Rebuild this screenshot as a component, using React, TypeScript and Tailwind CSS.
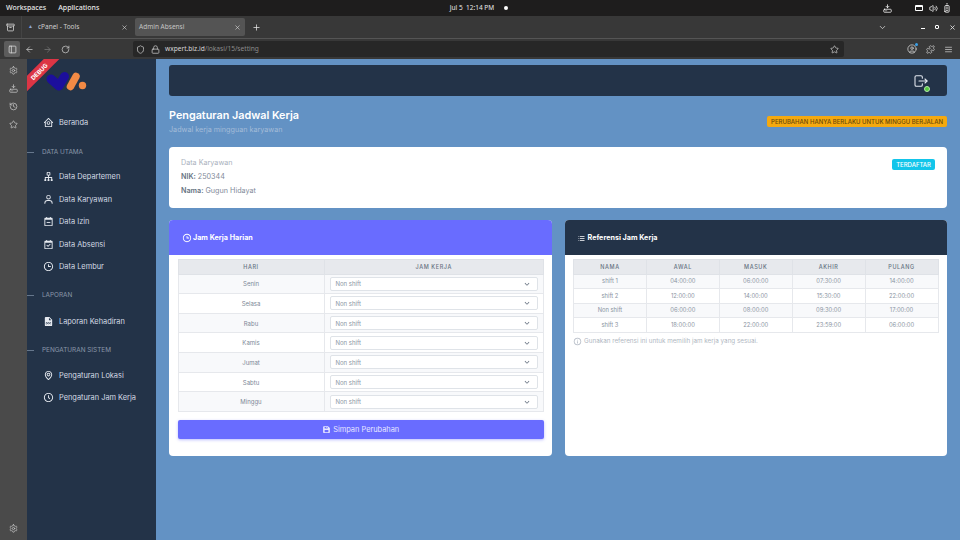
import React from "react";
import {
  BiHomeCircle, BiSitemap, BiUser, BiCalendarMinus, BiCalendarCheck, BiTime, BiSolidFileDoc, BiMap,
  BiTimeFive, BiListUl, BiInfoCircle, BiSolidSave, BiChevronDown,
} from "react-icons/bi";
import { TbLogout } from "react-icons/tb";
import {
  LuArchive, LuX, LuPlus, LuPanelLeft, LuArrowLeft, LuArrowRight, LuRotateCw, LuShield, LuLock, LuStar,
  LuChevronDown, LuPuzzle, LuMenu, LuSettings, LuHistory, LuVolume2, LuBatteryFull, LuCircleUser, LuHardDriveDownload,
} from "react-icons/lu";

const UI = "font-['Noto_Sans','Open_Sans',sans-serif]";

function NavItem({ icon: Icon, label }: { icon: any; label: string }) {
  return (
    <div className="flex h-[22.5px] items-center gap-[5px] pl-[16px] text-[#d5dbe4]">
      <Icon className="h-[11px] w-[11px] shrink-0 text-[#e6eaf0]" />
      <span className="text-[7.4px] leading-none whitespace-nowrap">{label}</span>
    </div>
  );
}

function NavHeading({ label }: { label: string }) {
  return (
    <div className="flex h-[12px] items-center text-[#8a97a9]">
      <span className="mr-[8px] h-px w-[7px] bg-[#66778c]" />
      <span className="text-[6.4px] leading-none whitespace-nowrap">{label}</span>
    </div>
  );
}

function Sidebar() {
  return (
    <aside className="relative flex w-[129px] shrink-0 flex-col overflow-hidden bg-[#233348]">
      <div className="absolute left-[-26px] top-[6.5px] flex h-[10.6px] w-[76px] rotate-[-45deg] items-center justify-center bg-[#dc3545] text-[6px] font-bold text-white">
        DEBUG
      </div>
      <div className="h-[39px] pl-[19px] pt-[12px]">
        <svg width="42" height="22" viewBox="0 0 42 22">
          <path d="M5 8 L13 15 L18.5 5.5" fill="none" stroke="#1c0f9c" strokeWidth="9" strokeLinecap="round" strokeLinejoin="round" />
          <path d="M24.5 15.5 L30 5.5" fill="none" stroke="#f28a45" strokeWidth="7.5" strokeLinecap="round" />
          <circle cx="36.5" cy="14.5" r="3.7" fill="#f28a45" />
        </svg>
      </div>
      <div className="mt-[13px]"><NavItem icon={BiHomeCircle} label="Beranda" /></div>
      <div className="mt-[12.5px]"><NavHeading label="DATA UTAMA" /></div>
      <div className="mt-[7.5px]">
        <NavItem icon={BiSitemap} label="Data Departemen" />
        <NavItem icon={BiUser} label="Data Karyawan" />
        <NavItem icon={BiCalendarMinus} label="Data Izin" />
        <NavItem icon={BiCalendarCheck} label="Data Absensi" />
        <NavItem icon={BiTime} label="Data Lembur" />
      </div>
      <div className="mt-[11.5px]"><NavHeading label="LAPORAN" /></div>
      <div className="mt-[8.5px]"><NavItem icon={BiSolidFileDoc} label="Laporan Kehadiran" /></div>
      <div className="mt-[12px]"><NavHeading label="PENGATURAN SISTEM" /></div>
      <div className="mt-[7.5px]">
        <NavItem icon={BiMap} label="Pengaturan Lokasi" />
        <NavItem icon={BiTimeFive} label="Pengaturan Jam Kerja" />
      </div>
    </aside>
  );
}

function BrowserChrome() {
  return (
    <>
      <div className={`flex h-[16px] items-center justify-between bg-[#1e1d1d] pl-[6px] pr-[8px] text-[7px] text-[#e8e8e8] ${UI}`}>
        <div className="flex w-[300px] gap-[12px] font-medium">
          <span>Workspaces</span>
          <span>Applications</span>
        </div>
        <div className="flex items-center gap-[10px] text-[6.5px]">
          <span>Jul 5&nbsp; 12:14 PM</span>
          <span className="h-[4px] w-[4px] rounded-full bg-white" />
        </div>
        <div className="flex w-[300px] items-center justify-end gap-[4px] text-white">
          <LuHardDriveDownload className="mr-[19px] h-[9px] w-[9px]" />
          <span className="mr-[2px] h-[6px] w-[8px] rounded-[1px] border border-white border-t-[2px]" />
          <LuVolume2 className="h-[9px] w-[9px]" />
          <LuBatteryFull className="h-[10px] w-[10px] -rotate-90" />
        </div>
      </div>
      <div className={`flex h-[23px] items-center border-b border-[#555] bg-[#383838] text-[6.5px] ${UI}`}>
        <div className="flex h-full w-[22px] items-center justify-center border-r border-[#444]">
          <LuArchive className="h-[9px] w-[9px] text-[#ddd]" />
        </div>
        <div className="flex h-[18px] w-[110px] items-center justify-between pl-[6px] pr-[4px] text-[#cfcfcf]">
          <span className="flex items-center gap-[5px]"><span className="text-[5px] text-[#8aa4d6]">▲</span>cPanel - Tools</span>
          <LuX className="h-[7px] w-[7px] text-[#ddd]" />
        </div>
        <div className="ml-[3px] flex h-[18px] w-[110px] items-center justify-between rounded-[2px] bg-[#545454] px-[4px] text-[#c4c4c4]">
          <span>Admin Absensi</span>
          <LuX className="h-[7px] w-[7px] text-[#ddd]" />
        </div>
        <LuPlus className="ml-[7px] h-[9px] w-[9px] text-[#e6e6e6]" />
        <div className="ml-auto flex items-center gap-[10px] pr-[4px] text-[#ddd]">
          <LuChevronDown className="mr-[24px] h-[9px] w-[9px]" />
          <span className="mt-[3px] h-px w-[4px] bg-white" />
          <span className="h-[4px] w-[4px] rounded-[1px] border border-white" />
          <LuX className="h-[7px] w-[7px]" strokeWidth={3} />
        </div>
      </div>
      <div className={`flex h-[20px] items-center bg-[#383838] text-[6.6px] ${UI}`}>
        <div className="ml-[4px] flex h-[16px] w-[16px] items-center justify-center rounded-[2px] bg-[#5c5c5c]">
          <LuPanelLeft className="h-[9px] w-[9px] text-[#ddd]" />
        </div>
        <LuArrowLeft className="ml-[5px] h-[9px] w-[9px] text-[#c8c8c8]" />
        <LuArrowRight className="ml-[9px] h-[9px] w-[9px] text-[#777]" />
        <LuRotateCw className="ml-[9px] h-[9px] w-[9px] text-[#c8c8c8]" />
        <div className="ml-[63px] flex h-[16px] w-[711px] items-center rounded-[2px] bg-[#272727] px-[3px] text-[#8c8c8c]">
          <LuShield className="h-[9px] w-[9px] text-[#c8c8c8]" />
          <LuLock className="ml-[6px] h-[9px] w-[9px] text-[#c8c8c8]" />
          <span className="ml-[5px]"><span className="text-[#d8d8d8]">wxpert.biz.id</span>/lokasi/15/setting</span>
          <LuStar className="ml-auto mr-[2px] h-[9px] w-[9px] text-[#c8c8c8]" />
        </div>
        <div className="ml-auto flex items-center gap-[9px] pr-[7px] text-[#c8c8c8]">
          <span className="relative">
            <LuCircleUser className="h-[10px] w-[10px]" />
            <span className="absolute right-[-1px] top-[-1px] h-[3px] w-[3px] rounded-full bg-[#3aa0e8]" />
          </span>
          <LuPuzzle className="h-[9px] w-[9px]" />
          <LuMenu className="h-[9px] w-[9px]" />
        </div>
      </div>
    </>
  );
}

const days = ["Senin", "Selasa", "Rabu", "Kamis", "Jumat", "Sabtu", "Minggu"];
const refs = [
  ["shift 1", "04:00:00", "06:00:00", "07:30:00", "14:00:00"],
  ["shift 2", "12:00:00", "14:00:00", "15:30:00", "22:00:00"],
  ["Non shift", "06:00:00", "08:00:00", "09:30:00", "17:00:00"],
  ["shift 3", "18:00:00", "22:00:00", "23:59:00", "06:00:00"],
];

export default function App() {
  return (
    <div className="flex h-[540px] w-[960px] flex-col overflow-hidden bg-[#6392c4] font-['Inter',sans-serif]">
      <BrowserChrome />
      <div className="flex min-h-0 flex-1">
        <div className="flex w-[27px] shrink-0 flex-col items-center bg-[#4a4a4a] pt-[7px] text-[#c4c4c4]">
          <LuSettings className="h-[9px] w-[9px]" />
          <LuHardDriveDownload className="mt-[9px] h-[9px] w-[9px]" />
          <LuHistory className="mt-[9px] h-[9px] w-[9px]" />
          <LuStar className="mt-[9px] h-[9px] w-[9px]" />
          <LuSettings className="mb-[7px] mt-auto h-[9px] w-[9px]" />
        </div>
        <Sidebar />
        <main className="min-w-0 flex-1 px-[13px] pt-[6px]">
          <div className="flex h-[31px] items-center justify-end rounded-[3px] bg-[#233348] pr-[18px]">
            <span className="relative">
              <TbLogout className="h-[16px] w-[16px] text-[#e4e9f0]" strokeWidth={1.6} />
              <span className="absolute bottom-[-3px] right-[-1px] h-[6px] w-[6px] rounded-full border border-[#b5e8a8] bg-[#55c93f]" />
            </span>
          </div>

          <div className="mt-[14px] flex items-start justify-between">
            <div>
              <h1 className="text-[10.8px] font-semibold leading-[12px] text-white">Pengaturan Jadwal Kerja</h1>
              <p className="mt-[3px] text-[7.2px] leading-[10px] text-[#a4bcd8]">Jadwal kerja mingguan karyawan</p>
            </div>
            <span className="mt-[6px] flex h-[11px] items-center rounded-[2px] bg-[#f5a90f] px-[4px] text-[6px] leading-none font-medium whitespace-nowrap text-[#694a0a]">
              PERUBAHAN HANYA BERLAKU UNTUK MINGGU BERJALAN
            </span>
          </div>

          <section className="mt-[12px] flex h-[61px] items-start justify-between rounded-[4px] bg-white pl-[12px] pr-[12px] pt-[10px]">
            <div className="text-[7.2px] leading-[13.5px] text-[#7f8a99]">
              <p className="leading-[12px] text-[#a9b1bd]">Data Karyawan</p>
              <p className="mt-[1px]"><b className="font-semibold text-[#667281]">NIK:</b> 250344</p>
              <p><b className="font-semibold text-[#667281]">Nama:</b> Gugun Hidayat</p>
            </div>
            <span className="mt-[2px] flex h-[11px] items-center rounded-[2px] bg-[#13c5ea] px-[4px] text-[6px] leading-none font-medium text-white">TERDAFTAR</span>
          </section>

          <div className="mt-[12px] grid grid-cols-2 gap-[13px]">
            <section className="h-[236px] overflow-hidden rounded-[4px] bg-white">
              <header className="flex h-[35px] items-center gap-[1px] bg-[#696cff] pl-[13px] pt-[1px] text-[7.2px] font-bold text-white">
                <BiTime className="h-[10px] w-[10px]" />Jam Kerja Harian
              </header>
              <div className="pl-[8.5px] pr-[7.5px] pt-[4px]">
                <table className="w-full table-fixed border-collapse border border-[#e6e8ec] text-[6px] text-[#7c8796]">
                  <thead>
                    <tr className="h-[14.5px] bg-[#e7e9ed] text-[5.5px] tracking-[0.6px] text-[#667281]">
                      <th className="w-[146px] border border-[#dfe2e7] font-medium">HARI</th>
                      <th className="border border-[#dfe2e7] font-medium">JAM KERJA</th>
                    </tr>
                  </thead>
                  <tbody>
                    {days.map((d, i) => (
                      <tr key={d} className={`h-[19.65px] ${i % 2 === 0 ? "bg-[#f8f9fb]" : "bg-white"}`}>
                        <td className="border border-[#e6e8ec] text-center">{d}</td>
                        <td className="border border-[#e6e8ec] px-[5px] py-0">
                          <div className="flex h-[14px] items-center justify-between rounded-[2px] border border-[#dfe3e8] bg-white pl-[5px] pr-[5px] text-[#8b95a3]">
                            <span>Non shift</span>
                            <BiChevronDown className="h-[10px] w-[10px] text-[#6f7a88]" />
                          </div>
                        </td>
                      </tr>
                    ))}
                  </tbody>
                </table>
                <button className="mt-[8px] flex h-[19.5px] w-full items-center justify-center gap-[2px] rounded-[2px] bg-[#696cff] text-[7.4px] text-[#e7e7ff] shadow-[0_1px_3px_rgba(105,108,255,0.45)]">
                  <BiSolidSave className="h-[9px] w-[9px]" />Simpan Perubahan
                </button>
              </div>
            </section>

            <section className="h-[236px] overflow-hidden rounded-[4px] bg-white">
              <header className="flex h-[35px] items-center gap-[2px] bg-[#233348] pl-[12px] pt-[1px] text-[7.2px] font-bold text-white">
                <BiListUl className="h-[9px] w-[9px]" />Referensi Jam Kerja
              </header>
              <div className="px-[8.5px] pt-[4px]">
                <table className="w-full table-fixed border-collapse border border-[#e6e8ec] text-[5.8px] text-[#8a94a2]">
                  <thead>
                    <tr className="h-[14.5px] bg-[#e7e9ed] text-[5.5px] tracking-[0.6px] text-[#667281]">
                      {["NAMA", "AWAL", "MASUK", "AKHIR", "PULANG"].map((h) => (
                        <th key={h} className="border border-[#dfe2e7] font-medium">{h}</th>
                      ))}
                    </tr>
                  </thead>
                  <tbody>
                    {refs.map((r, i) => (
                      <tr key={r[0]} className={`h-[14.6px] ${i % 2 === 0 ? "bg-[#f8f9fb]" : "bg-white"}`}>
                        {r.map((c, j) => (
                          <td key={j} className="border border-[#e6e8ec] p-0 text-center">{c}</td>
                        ))}
                      </tr>
                    ))}
                  </tbody>
                </table>
                <p className="mt-[4px] flex items-center gap-[2px] text-[6.3px] text-[#b0b7c2]">
                  <BiInfoCircle className="h-[9px] w-[9px]" />Gunakan referensi ini untuk memilih jam kerja yang sesuai.
                </p>
              </div>
            </section>
          </div>
        </main>
      </div>
    </div>
  );
}
